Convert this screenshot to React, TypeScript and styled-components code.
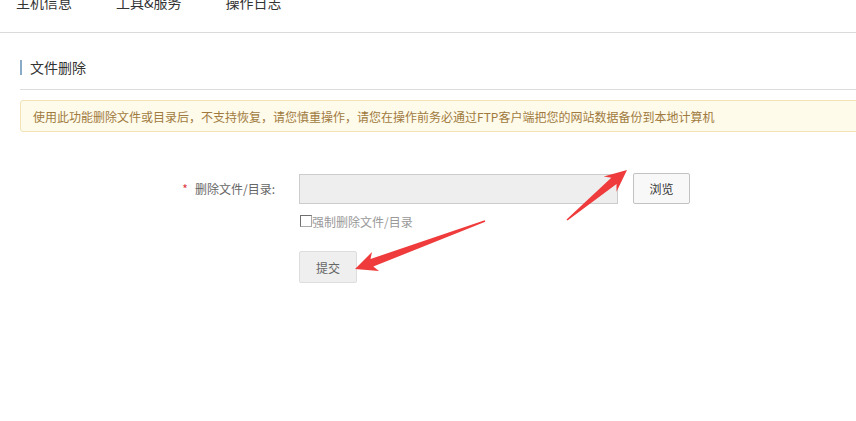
import React from "react";
import styled, { createGlobalStyle } from "styled-components";

const Global = createGlobalStyle`
  html, body { margin: 0; padding: 0; background: #fff; overflow: hidden; }
  body { font-family: "Noto Sans CJK SC", "Liberation Sans", sans-serif; color: #333; }
  * { box-sizing: border-box; }
`;

const Page = styled.div`
  position: relative;
  width: 856px;
  height: 421px;
  overflow: hidden;
`;

const Nav = styled.nav`
  display: flex;
  gap: 44px;
  margin-top: -20px;
  height: 53px;
  padding-left: 16px;
  border-bottom: 1px solid #dadada;
`;

const Tab = styled.div`
  font-size: 14px;
  line-height: 44px;
  color: #333;
  white-space: nowrap;
`;

const Content = styled.div`
  padding-left: 20px;
  margin-right: -12px;
`;

const TitleRow = styled.div`
  display: flex;
  align-items: center;
  height: 57px;
  padding-top: 12px;
  border-bottom: 1px solid #dcdcdc;
`;

const TitleBar = styled.span`
  width: 2px;
  height: 15px;
  background: #8aabc8;
  margin-right: 8px;
`;

const TitleText = styled.h2`
  margin: 0;
  font-size: 14px;
  font-weight: normal;
  color: #333;
`;

const Alert = styled.div`
  margin-top: 10px;
  height: 32px;
  display: flex;
  align-items: center;
  padding-left: 12px;
  background: #fffbea;
  border: 1px solid #f1e3b5;
  border-radius: 3px;
  font-size: 12px;
  color: #a07a3e;
  white-space: nowrap;
`;

const Form = styled.div`
  margin-top: 41px;
  display: grid;
  grid-template-columns: 279px auto;
  row-gap: 0;
`;

const Label = styled.label`
  display: flex;
  align-items: center;
  justify-content: flex-end;
  padding-right: 24px;
  font-size: 12px;
  color: #666;
  height: 31px;
`;

const Star = styled.span`
  color: #e03b3b;
  margin-right: 7px;
  font-size: 12px;
`;

const FieldRow = styled.div`
  display: flex;
  align-items: flex-start;
  gap: 15px;
`;

const FileInput = styled.div`
  width: 319px;
  height: 30px;
  margin-top: 1px;
  background: #eeeeee;
  border: 1px solid #cccccc;
`;

const Button = styled.button<{ $muted?: boolean }>`
  height: ${(p) => (p.$muted ? 32 : 31)}px;
  width: ${(p) => (p.$muted ? 58 : 57)}px;
  padding: 0;
  font-family: inherit;
  font-size: 12px;
  color: ${(p) => (p.$muted ? "#666" : "#333")};
  background: ${(p) => (p.$muted ? "#efefef" : "#f8f8f8")};
  border: 1px solid ${(p) => (p.$muted ? "#dddddd" : "#c2c2c2")};
  border-radius: 2px;
`;

const Empty = styled.div``;

const CheckRow = styled.label`
  display: flex;
  align-items: center;
  margin-top: 10px;
  margin-left: 1px;
  height: 14px;
  font-size: 12px;
  color: #999;
`;

const Box = styled.span`
  width: 12px;
  height: 12px;
  border: 1px solid #6f6f6f;
  border-right-color: #aaa;
  border-bottom-color: #aaa;
  background: #fff;
`;

const SubmitWrap = styled.div`
  margin-top: 23px;
`;

const Arrows = styled.svg`
  position: absolute;
  left: 0;
  top: 0;
  pointer-events: none;
`;

export default function App() {
  return (
    <Page>
      <Global />
      <Nav>
        <Tab>主机信息</Tab>
        <Tab>工具&amp;服务</Tab>
        <Tab>操作日志</Tab>
      </Nav>
      <Content>
        <TitleRow>
          <TitleBar />
          <TitleText>文件删除</TitleText>
        </TitleRow>
        <Alert>
          使用此功能删除文件或目录后，不支持恢复，请您慎重操作，请您在操作前务必通过FTP客户端把您的网站数据备份到本地计算机
        </Alert>
        <Form>
          <Label>
            <Star>*</Star>删除文件/目录:
          </Label>
          <FieldRow>
            <FileInput />
            <Button>浏览</Button>
          </FieldRow>
          <Empty />
          <CheckRow>
            <Box />
            强制删除文件/目录
          </CheckRow>
          <Empty />
          <SubmitWrap>
            <Button $muted>提交</Button>
          </SubmitWrap>
        </Form>
      </Content>
      <Arrows width="856" height="421" viewBox="0 0 856 421">
        <polygon
          fill="#ef3b3b"
          points="484.7,220.2 370.5,259 372,252 355,269 379,271 373.3,266.5 485.3,221.8"
        />
        <polygon
          fill="#ef3b3b"
          points="566.5,219.4 611.3,177.8 603.7,176.4 627,170 616.5,191.8 616.5,184 567.5,220.6"
        />
      </Arrows>
    </Page>
  );
}
